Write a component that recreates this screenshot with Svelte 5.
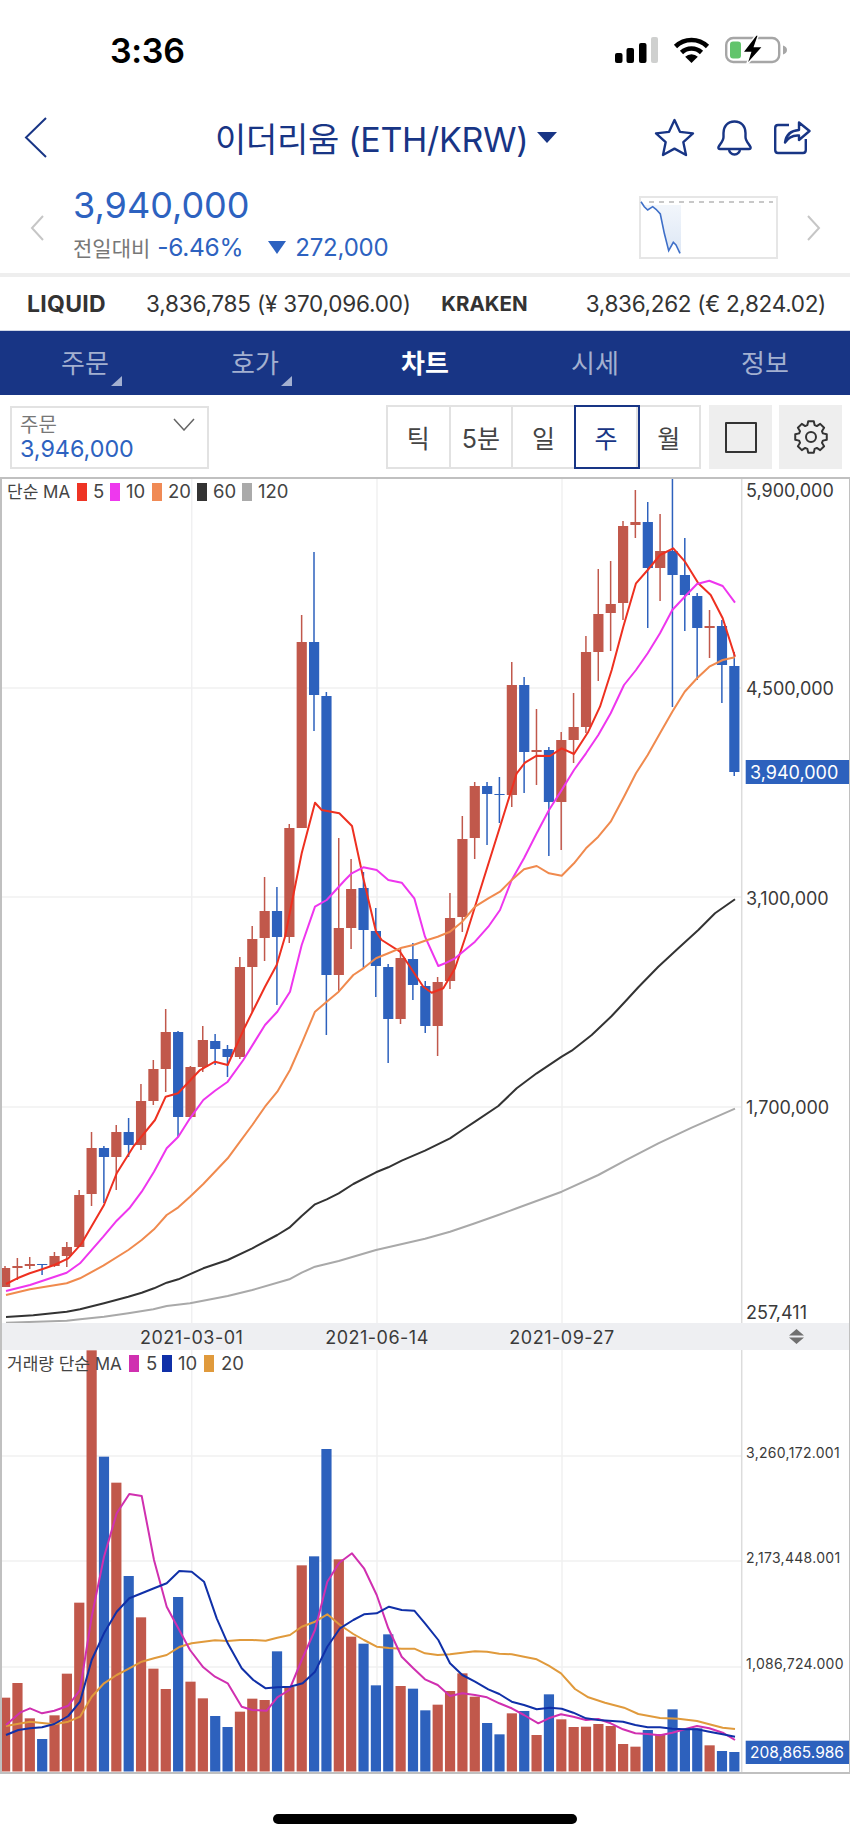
<script>
  const RED = '#c1584b';
  const BLUE = '#2d61bd';
  const cx = (i) => 5 + 12.36 * i;

  // hi, bodyTop, bodyBottom, lo, colour
  const candles = [
    [866,1268,1287,1287,'r'],[1258,1266,1268,1280,'r'],[1257,1264,1266,1269,'r'],[1264,1264,1265,1275,'b'],
    [1252,1256,1266,1267,'r'],[1242,1247,1256,1267,'r'],[1190,1195,1247,1247,'r'],[1132,1148,1194,1206,'r'],
    [1146,1148,1157,1203,'b'],[1125,1132,1157,1190,'r'],[1118,1132,1145,1157,'b'],[1084,1101,1145,1150,'r'],
    [1060,1069,1101,1105,'r'],[1009,1032,1069,1092,'r'],[1031,1032,1117,1137,'b'],[1066,1067,1117,1117,'r'],
    [1026,1040,1067,1072,'r'],[1034,1041,1049,1065,'b'],[1045,1049,1057,1077,'b'],[957,967,1057,1059,'r'],
    [926,939,967,1012,'r'],[877,911,938,961,'r'],[887,911,937,1005,'b'],[824,828,937,943,'r'],
    [615,642,828,828,'r'],[552,642,695,731,'b'],[692,696,975,1035,'b'],[838,928,975,992,'r'],
    [859,889,928,949,'r'],[872,888,930,969,'b'],[908,931,966,997,'b'],[964,967,1019,1063,'b'],
    [948,958,1019,1024,'r'],[943,959,985,1000,'b'],[981,986,1026,1033,'b'],[977,982,1026,1056,'r'],
    [893,918,981,989,'r'],[816,839,917,932,'r'],[782,786,838,859,'r'],[782,786,794,845,'b'],
    [777,794,795,823,'b'],[662,685,795,807,'r'],[677,685,752,793,'b'],[709,750,752,785,'r'],
    [747,750,802,856,'b'],[732,740,802,850,'r'],[693,727,740,763,'r'],[636,652,727,733,'r'],
    [569,614,652,681,'r'],[561,604,613,651,'r'],[521,526,603,620,'r'],[490,522,525,538,'r'],
    [502,522,568,628,'b'],[514,551,568,601,'r'],[470,551,575,707,'b'],[538,575,595,631,'b'],
    [593,596,628,680,'b'],[610,626,628,658,'r'],[620,626,665,703,'b'],[652,666,772,776,'b']
  ];

  // bar tops as read from the volume panel
  const volTops = [
    [1073,'r'],[1029,'r'],[1135,'r'],[1197,'b'],[1126,'r'],[1001,'r'],[788,'r'],[31,'r'],[350,'b'],[428,'r'],
    [708,'b'],[832,'r'],[986,'r'],[1047,'r'],[771,'b'],[1025,'r'],[1075,'r'],[1128,'b'],[1161,'b'],[1115,'r'],
    [1076,'r'],[1080,'r'],[934,'b'],[1040,'r'],[676,'r'],[649,'b'],[327,'b'],[658,'r'],[890,'r'],[911,'b'],
    [1036,'b'],[883,'b'],[1038,'r'],[1046,'b'],[1111,'b'],[1094,'r'],[1053,'r'],[1000,'r'],[1070,'r'],[1149,'b'],
    [1183,'b'],[1120,'r'],[1113,'b'],[1185,'r'],[1063,'b'],[1138,'r'],[1161,'r'],[1160,'r'],[1152,'r'],[1158,'r'],
    [1212,'r'],[1220,'r'],[1170,'b'],[1182,'r'],[1108,'b'],[1168,'b'],[1165,'b'],[1216,'r'],[1233,'b'],[1236,'b']
  ];

  const seg = (ox, oy, s) => s.map(([x, y]) => `${(ox + x / 3).toFixed(1)},${(oy + y / 3).toFixed(1)}`).join(' ');

  const priceLines = [
    { c: '#ee3020', w: 2, p: seg(0,880,[[18,1212],[52,1195],[89,1180],[126,1168],[163,1155],[205,1135],[245,1090],[312,975],[350,880],[400,800],[465,720],[497,650],[534,640],[600,570],[645,545],[683,555],[735,440],[795,320],[830,255],[855,170],[905,-80],[945,-232],[965,-210],[1018,-200],[1056,-162],[1090,-5],[1128,155],[1145,180],[1200,215],[1270,320],[1295,338],[1330,325],[1365,265],[1400,160],[1450,0],[1500,-160],[1550,-320],[1575,-352],[1610,-373],[1650,-372],[1685,-395],[1722,-378],[1765,-445],[1800,-520],[1835,-630],[1870,-760],[1908,-890],[1943,-930],[1980,-975],[2020,-995],[2055,-955],[2095,-890],[2132,-855],[2168,-785],[2205,-670]]) },
    { c: '#ee36ee', w: 2, p: seg(0,880,[[18,1233],[90,1215],[200,1178],[240,1150],[310,1070],[350,1022],[388,985],[425,935],[462,875],[500,805],[535,770],[570,715],[610,660],[645,632],[683,605],[730,540],[795,435],[832,395],[870,335],[905,195],[945,80],[980,60],[1035,0],[1055,-20],[1090,-38],[1130,-30],[1165,0],[1205,8],[1243,55],[1275,170],[1315,258],[1335,250],[1365,235],[1425,185],[1465,140],[1500,90],[1535,0],[1572,-65],[1610,-140],[1647,-210],[1685,-270],[1722,-330],[1758,-380],[1795,-435],[1832,-500],[1872,-585],[1908,-630],[1943,-680],[1980,-740],[2017,-810],[2054,-850],[2091,-888],[2128,-898],[2168,-882],[2205,-832]]) },
    { c: '#f08a4e', w: 2, p: seg(0,880,[[18,1245],[90,1228],[200,1210],[240,1195],[310,1157],[385,1110],[425,1080],[462,1048],[500,1005],[535,982],[570,950],[610,912],[683,835],[720,785],[757,735],[795,680],[832,635],[870,570],[905,490],[945,395],[980,365],[1016,335],[1060,285],[1090,265],[1128,235],[1165,220],[1205,203],[1240,195],[1275,182],[1313,170],[1350,155],[1387,125],[1425,80],[1465,55],[1500,35],[1535,0],[1572,-32],[1610,-42],[1647,-20],[1685,-13],[1722,-50],[1758,-95],[1795,-130],[1832,-175],[1872,-250],[1908,-320],[1943,-375],[1980,-440],[2017,-505],[2054,-565],[2091,-605],[2128,-640],[2168,-660],[2205,-668]]) },
    { c: '#333333', w: 2, p: seg(0,880,[[18,1311],[100,1306],[200,1295],[240,1288],[312,1270],[385,1250],[425,1238],[462,1225],[500,1208],[535,1198],[610,1165],[683,1140],[757,1105],[832,1065],[868,1043],[905,1008],[945,973],[980,958],[1016,940],[1060,912],[1128,877],[1165,862],[1205,842],[1275,812],[1350,775],[1387,750],[1425,725],[1495,678],[1550,625],[1610,580],[1685,530],[1715,512],[1775,465],[1835,408],[1875,365],[1915,322],[1975,260],[2035,205],[2095,150],[2145,100],[2205,58]]) },
    { c: '#a9a9a9', w: 2, p: seg(0,880,[[18,1328],[200,1322],[240,1318],[312,1310],[385,1300],[460,1288],[500,1278],[570,1270],[683,1248],[757,1230],[868,1198],[905,1178],[945,1160],[1016,1143],[1128,1110],[1275,1076],[1350,1055],[1425,1030],[1495,1005],[1550,985],[1685,935],[1795,885],[1875,842],[1975,790],[2075,743],[2205,686]]) }
  ];

  const volLines = [
    { c: '#e09a3c', p: seg(0,1340,[[18,1158],[90,1145],[163,1153],[205,1145],[240,1130],[275,1070],[312,1030],[350,1005],[388,985],[425,965],[462,955],[500,945],[540,920],[575,910],[645,901],[683,903],[720,900],[757,900],[797,902],[832,893],[870,885],[905,860],[945,845],[982,823],[1020,855],[1060,882],[1092,900],[1130,920],[1167,924],[1205,926],[1243,926],[1275,940],[1313,945],[1350,943],[1387,938],[1425,934],[1461,935],[1498,941],[1535,943],[1572,950],[1610,958],[1646,977],[1683,1000],[1725,1047],[1765,1072],[1815,1088],[1872,1103],[1915,1122],[1980,1134],[2035,1136],[2091,1143],[2128,1153],[2168,1163],[2205,1167]]) },
    { c: '#d030b0', p: seg(0,1340,[[18,1155],[60,1118],[90,1105],[126,1120],[163,1112],[205,1097],[240,1050],[275,830],[312,650],[350,520],[388,462],[425,468],[462,660],[500,800],[570,930],[610,982],[645,1010],[683,1030],[725,1100],[757,1110],[800,1112],[832,1072],[868,1050],[905,960],[945,870],[982,725],[1018,668],[1056,640],[1092,685],[1130,765],[1165,865],[1205,950],[1240,985],[1275,1018],[1313,1035],[1350,1068],[1387,1060],[1425,1065],[1461,1072],[1498,1090],[1535,1105],[1572,1125],[1615,1150],[1646,1135],[1683,1123],[1720,1130],[1758,1140],[1795,1137],[1832,1150],[1869,1168],[1906,1180],[1943,1182],[1980,1186],[2017,1178],[2054,1168],[2091,1158],[2128,1165],[2168,1178],[2205,1200]]) },
    { c: '#1030a8', p: seg(0,1340,[[18,1185],[55,1170],[90,1165],[126,1162],[163,1152],[205,1128],[240,1085],[275,960],[312,880],[350,815],[388,775],[425,760],[462,745],[500,730],[538,693],[575,695],[612,725],[650,835],[683,910],[725,985],[760,1020],[797,1045],[832,1042],[870,1040],[908,1030],[945,995],[982,920],[1020,865],[1060,840],[1092,823],[1130,820],[1167,800],[1205,810],[1243,812],[1275,850],[1315,900],[1350,970],[1387,1005],[1425,1025],[1465,1048],[1498,1062],[1535,1085],[1572,1095],[1610,1108],[1650,1103],[1685,1106],[1720,1118],[1758,1135],[1795,1140],[1869,1145],[1906,1155],[1943,1162],[1980,1162],[2017,1166],[2054,1168],[2091,1168],[2128,1175],[2168,1183],[2205,1190]]) }
  ];

  const vGrid = [191.7, 377, 562];
  const hGrid = [688, 897, 1107];
  const vhGrid = [1456, 1561, 1667];
  const priceLabels = [['5,900,000', 490], ['4,500,000', 688], ['3,100,000', 898], ['1,700,000', 1107], ['257,411', 1312]];
  const volLabels = [['3,260,172.001', 1453], ['2,173,448.001', 1558], ['1,086,724.000', 1664]];

  const legend1 = [[77, '#ee3424', 93, '5'], [110, '#ee38ee', 126, '10'], [152, '#f08a55', 168, '20'], [197, '#333333', 213, '60'], [242, '#aaaaaa', 258, '120']];
  const legend2 = [[129, '#d030b0', 146, '5'], [162, '#1030a8', 178, '10'], [204, '#e09a3c', 221, '20']];

  const tabs = [
    { t: '주문', m: true }, { t: '호가', m: true }, { t: '차트', on: true }, { t: '시세' }, { t: '정보' }
  ];
  const periods = ['틱', '5분', '일', '주', '월'];

  // 8-tooth gear outline
  function gear() {
    const c = 17, n = 8;
    let d = '';
    for (let i = 0; i < n; i++) {
      const a = (i * 360) / n - 90;
      const pt = (r, da) => {
        const t = ((a + da) * Math.PI) / 180;
        return `${(c + r * Math.cos(t)).toFixed(2)} ${(c + r * Math.sin(t)).toFixed(2)}`;
      };
      d += `${i ? 'L' : 'M'}${pt(12.4, -17)} L${pt(16, -10)} L${pt(16, 10)} L${pt(12.4, 17)} `;
    }
    return d + 'Z';
  }
  const gearPath = gear();
</script>

<div class="page">
  <div class="status">
    <span class="time">3:36</span>
    <div class="status-icons">
      <svg width="43" height="26" viewBox="0 0 43 26">
        <rect x="0" y="16" width="7.5" height="10" rx="2" fill="#000" />
        <rect x="11.5" y="11" width="7.5" height="15" rx="2" fill="#000" />
        <rect x="24" y="6" width="7.5" height="20" rx="2" fill="#000" />
        <rect x="36" y="0" width="7" height="26" rx="2" fill="#cfd0cf" />
      </svg>
      <svg width="37" height="26" viewBox="0 0 37 26">
        <path d="M2.5 9.5A23 23 0 0 1 34.5 9.5" fill="none" stroke="#000" stroke-width="4.6" />
        <path d="M8.5 15.5A14.5 14.5 0 0 1 28.5 15.5" fill="none" stroke="#000" stroke-width="4.6" />
        <path d="M18.5 26L12.2 19.8A9 9 0 0 1 24.8 19.8Z" fill="#000" />
      </svg>
      <svg width="62" height="30" viewBox="0 0 62 30">
        <rect x="1.2" y="3" width="53" height="24" rx="7" fill="none" stroke="#a6a6a6" stroke-width="2.4" />
        <rect x="5" y="6.5" width="11" height="17" rx="3" fill="#62c46c" />
        <path d="M58 10.5c2.5.8 4 2.3 4 4.5s-1.500 3.700-4 4.500Z" fill="#a6a6a6" />
        <path d="M31 0L17.500 17.500H25.500L21.500 30L38 11.500H29.500L33.500 0Z" fill="#000" stroke="#fff" stroke-width="1.400" />
      </svg>
    </div>
  </div>

  <div class="nav">
    <svg class="back" width="23" height="41" viewBox="0 0 23 41">
      <path d="M22 1L2 20.500L22 40" fill="none" stroke="#183585" stroke-width="2" />
    </svg>
    <span class="title">이더리움 (ETH/KRW)</span>
    <span class="caret"></span>
    <div class="nav-icons">
      <svg class="star" width="39" height="37" viewBox="2 1 36 36">
        <path d="M20 2L25.300 13.500L38 15L28.600 23.600L31.200 36L20 29.800L8.800 36L11.400 23.600L2 15L14.700 13.500Z" fill="none" stroke="#183585" stroke-width="2.300" stroke-linejoin="round" />
      </svg>
      <svg width="35" height="36" viewBox="0 0 35 36">
        <path d="M17.500 1.500C10 1.500 6.500 7 6.500 13V17C6.500 21 3 24 1.500 27Q1 29 3 29H32Q34 29 33.500 27C32 24 28.500 21 28.500 17V13C28.500 7 25 1.500 17.500 1.500ZM12 29A5.500 5.500 0 0 0 23 29" fill="none" stroke="#183585" stroke-width="2.400" stroke-linejoin="round" />
      </svg>
      <svg width="37" height="35" viewBox="0 0 37 35">
        <path d="M15 5H4Q1.200 5 1.200 8V30Q1.200 33 4 33H29Q31.800 33 31.800 30V19" fill="none" stroke="#183585" stroke-width="2.400" />
        <path d="M11 22.500C12 15 17 10.500 25 10V2.500L35.500 11L25 20V15.500C19 15 14.500 17 11 22.500Z" fill="none" stroke="#183585" stroke-width="2.400" stroke-linejoin="round" />
      </svg>
    </div>
  </div>

  <div class="price-row">
    <svg class="chev-prev" width="14" height="26" viewBox="0 0 14 26">
      <path d="M13 1L2 13L13 25" fill="none" stroke="#c6c6c6" stroke-width="2" />
    </svg>
    <div class="price-col">
      <div class="price">3,940,000</div>
      <div class="change">
        <span class="change-label">전일대비</span>
        <span class="change-pct">-6.46%</span>
        <span class="tri"></span>
        <span class="change-amt">272,000</span>
      </div>
    </div>
    <svg class="mini" width="139" height="63" viewBox="638 196 139 63">
      <defs>
        <linearGradient id="miniFill" x1="0" y1="0" x2="0" y2="1">
          <stop offset="0" stop-color="#dfe9f6" stop-opacity="0.4" />
          <stop offset="1" stop-color="#dde7f5" />
        </linearGradient>
      </defs>
      <rect x="639" y="197" width="137" height="61" fill="#fff" stroke="#e6e6e6" stroke-width="2" />
      <path d="M648 202H772" stroke="#c8c8c8" stroke-width="2" stroke-dasharray="5 5" />
      <polygon points="640,203.700 643.300,206.700 646.700,210 651.700,206.700 655,209.300 659.300,214 663.300,233.300 667.700,250.700 672.300,242.300 675,245 679,253.300 680,253.300 680,205 640,205" fill="url(#miniFill)" />
      <polyline points="640,201.700 643.300,206.700 646.700,210 651.700,206.700 655,209.300 659.300,214 663.300,233.300 667.700,250.700 672.300,242.300 675,245 679,253.300" fill="none" stroke="#3e6fc8" stroke-width="1.600" />
    </svg>
    <svg class="chev-next" width="14" height="26" viewBox="0 0 14 26">
      <path d="M1 1L12 13L1 25" fill="none" stroke="#c6c6c6" stroke-width="2" />
    </svg>
  </div>

  <div class="sep"></div>

  <div class="exchange">
    <b class="ex-name">LIQUID</b>
    <span class="ex-val">3,836,785 (¥ 370,096.00)</span>
    <b class="ex-name ex-kraken">KRAKEN</b>
    <span class="ex-val ex-right">3,836,262 (€ 2,824.02)</span>
  </div>

  <div class="tabs">
    {#each tabs as tab}
      <div class="tab" class:on={tab.on}>
        <span class="tab-label">{tab.t}{#if tab.m}<i class="corner"></i>{/if}</span>
      </div>
    {/each}
  </div>

  <div class="tools">
    <div class="select">
      <div class="select-label">주문</div>
      <div class="select-value">3,946,000</div>
      <svg class="select-chev" width="22" height="13" viewBox="0 0 22 13">
        <path d="M1 1L11 12L21 1" fill="none" stroke="#666" stroke-width="1.500" />
      </svg>
    </div>
    <div class="periods">
      {#each periods as p, i}
        <div class="period" class:sel={i === 3}>{p}</div>
      {/each}
    </div>
    <div class="tool-btn">
      <span class="square"></span>
    </div>
    <div class="tool-btn">
      <svg width="36" height="36" viewBox="-1 -1 36 36">
        <path d={gearPath} fill="none" stroke="#333" stroke-width="2" stroke-linejoin="round" />
        <circle cx="17" cy="17" r="5" fill="none" stroke="#333" stroke-width="2" />
      </svg>
    </div>
  </div>

  <div class="panel">
    <svg class="chart" width="847" height="1293" viewBox="2 479 847 1293">
      <!-- price pane grid -->
      {#each vGrid as x}
        <line x1={x} x2={x} y1="479" y2="1772" class="grid" />
      {/each}
      {#each hGrid as y}
        <line x1="2" x2="741" y1={y} y2={y} class="grid" />
      {/each}
      {#each vhGrid as y}
        <line x1="2" x2="741" y1={y} y2={y} class="grid" />
      {/each}
      <line x1="741.700" x2="741.700" y1="479" y2="1772" class="axis" />

      {#each candles as c, i}
        <line x1={cx(i)} x2={cx(i)} y1={i === 0 ? 1266 : c[0]} y2={c[3]} stroke={c[4] === 'r' ? RED : BLUE} stroke-width="1.500" />
        <rect x={cx(i) - 5} y={c[1]} width="10.200" height={c[2] - c[1]} fill={c[4] === 'r' ? RED : BLUE} />
      {/each}

      {#each priceLines as l}
        <polyline points={l.p} fill="none" stroke={l.c} stroke-width={l.w} stroke-linejoin="round" />
      {/each}

      {#each volTops as v, i}
        <rect x={cx(i) - 5} y={1340 + v[0] / 3} width="10.200" height={1771.500 - (1340 + v[0] / 3)} fill={v[1] === 'r' ? RED : BLUE} />
      {/each}

      {#each volLines as l}
        <polyline points={l.p} fill="none" stroke={l.c} stroke-width="2" stroke-linejoin="round" />
      {/each}

      <!-- time bar -->
      <rect x="2" y="1323" width="847" height="27" fill="#eeeff2" />
      <text x="191.700" y="1343.500" text-anchor="middle" class="lbl date">2021-03-01</text>
      <text x="377" y="1343.500" text-anchor="middle" class="lbl date">2021-06-14</text>
      <text x="562" y="1343.500" text-anchor="middle" class="lbl date">2021-09-27</text>
      <path d="M796.500 1329L804 1335.500H789ZM796.500 1344L804 1337.500H789Z" fill="#707070" />

      <!-- price axis -->
      {#each priceLabels as l}
        <text x="746" y={l[1] + 6.500} class="lbl">{l[0]}</text>
      {/each}
      <rect x="745.700" y="760" width="103.300" height="24" fill={BLUE} />
      <text x="750" y="778.500" class="lbl white">3,940,000</text>

      <!-- volume axis -->
      {#each volLabels as l}
        <text x="746" y={l[1] + 5} class="lbl-sm">{l[0]}</text>
      {/each}
      <rect x="745.700" y="1740.700" width="103.300" height="23.300" fill={BLUE} />
      <text x="750" y="1757.800" class="lbl-vol">208,865.986</text>

      <!-- legends -->
      <text x="7" y="498" class="lgd">단순 MA</text>
      {#each legend1 as l}
        <rect x={l[0]} y="483" width="10" height="18" fill={l[1]} />
        <text x={l[2]} y="498" class="lgd num">{l[3]}</text>
      {/each}
      <text x="7" y="1370" class="lgd">거래량 단순 MA</text>
      {#each legend2 as l}
        <rect x={l[0]} y="1355" width="10" height="17" fill={l[1]} />
        <text x={l[2]} y="1370" class="lgd num">{l[3]}</text>
      {/each}
    </svg>
  </div>

  <div class="home-wrap"><div class="home"></div></div>
</div>

<style>
  :global(body) {
    margin: 0;
    background: #fff;
  }
  .page {
    width: 850px;
    height: 1840px;
    overflow: hidden;
    background: #fff;
    font-family: Inter, "Noto Sans CJK KR", sans-serif;
    color: #333;
  }
  svg {
    display: block;
    flex: none;
  }

  .status {
    height: 100px;
    display: flex;
    align-items: center;
    padding: 0 63px 0 110px;
    box-sizing: border-box;
  }
  .time {
    font-size: 34px;
    font-weight: 600;
    color: #000;
    letter-spacing: -0.3px;
  }
  .status-icons {
    margin-left: auto;
    display: flex;
    align-items: center;
    gap: 15px;
  }

  .nav {
    height: 75px;
    display: flex;
    align-items: center;
    padding: 0 39px 0 24px;
    box-sizing: border-box;
  }
  .title {
    margin-left: 168px;
    font-size: 34px;
    color: #183585;
    letter-spacing: -0.3px;
    white-space: nowrap;
  }
  .caret {
    margin-left: 9px;
    width: 0;
    height: 0;
    border-left: 10px solid transparent;
    border-right: 10px solid transparent;
    border-top: 11px solid #183585;
  }
  .nav-icons {
    margin-left: auto;
    display: flex;
    align-items: center;
    gap: 22px;
  }
  .star {
    margin-right: 1px;
    overflow: visible;
  }

  .price-row {
    height: 98px;
    display: flex;
    align-items: center;
    padding: 7px 29px 0 30px;
    box-sizing: border-box;
  }
  .price-col {
    align-self: flex-start;
    margin: 3px 0 0 29px;
  }
  .price {
    font-size: 36px;
    line-height: 40px;
    color: #2d62c0;
  }
  .change {
    display: flex;
    align-items: center;
    height: 26px;
    margin-top: 9px;
    color: #2d62c0;
  }
  .change-label {
    font-size: 21px;
    color: #777;
  }
  .change-pct {
    font-size: 24.500px;
    margin-left: 7px;
    letter-spacing: -0.3px;
  }
  .tri {
    width: 0;
    height: 0;
    margin-left: 25px;
    border-left: 9.500px solid transparent;
    border-right: 9.500px solid transparent;
    border-top: 13px solid #2d62c0;
  }
  .change-amt {
    font-size: 24px;
    margin-left: 9px;
    letter-spacing: -0.2px;
  }
  .mini {
    margin-left: auto;
  }
  .chev-next {
    margin-left: 29px;
  }

  .sep {
    height: 4px;
    background: #eeeeee;
  }

  .exchange {
    height: 53px;
    display: flex;
    align-items: center;
    padding: 0 24px 0 27px;
    box-sizing: border-box;
    font-size: 22.500px;
    color: #333;
  }
  .ex-name {
    font-size: 23px;
    font-weight: 700;
    letter-spacing: 0.3px;
    width: 119px;
    flex: none;
  }
  .ex-val {
    letter-spacing: -0.2px;
    white-space: nowrap;
  }
  .ex-kraken {
    font-size: 20.500px;
    letter-spacing: 0;
    margin-left: auto;
    width: auto;
  }
  .ex-right {
    margin-left: 58px;
    letter-spacing: -0.3px;
  }

  .tabs {
    height: 65px;
    display: flex;
    background: #183585;
    border-top: 1px solid #cfd6e6;
    box-sizing: border-box;
  }
  .tab {
    flex: 1;
    display: flex;
    align-items: center;
    justify-content: center;
    color: #a3b0d0;
    font-size: 26px;
    padding-bottom: 3px;
  }
  .tab.on {
    color: #fff;
    font-weight: 700;
  }
  .tab-label {
    position: relative;
  }
  .corner {
    position: absolute;
    right: -13px;
    bottom: -6px;
    width: 0;
    height: 0;
    border-left: 11px solid transparent;
    border-bottom: 10px solid #a3b0d0;
  }

  .tools {
    height: 82px;
    display: flex;
    align-items: flex-start;
    padding: 10px 8px 0 10px;
    box-sizing: border-box;
  }
  .select {
    position: relative;
    width: 199px;
    height: 63px;
    margin-top: 1px;
    padding: 5px 0 0 8px;
    box-sizing: border-box;
    border: 2px solid #e2e2e2;
  }
  .select-label {
    font-size: 20px;
    line-height: 24px;
    color: #777;
  }
  .select-value {
    font-size: 23.300px;
    line-height: 24px;
    color: #2d62c0;
  }
  .select-chev {
    position: absolute;
    right: 12px;
    top: 10px;
  }
  .periods {
    width: 315px;
    height: 64px;
    margin-left: 177px;
    display: flex;
    border: 2px solid #e2e2e2;
    box-sizing: border-box;
  }
  .period {
    flex: 1;
    display: flex;
    align-items: center;
    justify-content: center;
    font-size: 25px;
    color: #444;
    border-right: 2px solid #e2e2e2;
  }
  .period:last-child {
    border-right: 0;
  }
  .period.sel {
    color: #183585;
    outline: 2px solid #183585;
    outline-offset: 0;
    position: relative;
  }
  .tool-btn {
    width: 63px;
    height: 64px;
    margin-left: 8px;
    background: #eeeeee;
    display: flex;
    align-items: center;
    justify-content: center;
  }
  .tool-btn + .tool-btn {
    margin-left: 7px;
  }
  .square {
    width: 28px;
    height: 27px;
    border: 2px solid #333;
    border-radius: 1px;
  }

  .panel {
    width: 850px;
    box-sizing: border-box;
    border-style: solid;
    border-color: #c0c0c0;
    border-width: 2px 1px 2px 2px;
  }
  .grid {
    stroke: #f0f0f1;
    stroke-width: 1.500;
  }
  .axis {
    stroke: #dcdcdc;
    stroke-width: 1.500;
  }
  .lbl {
    font-size: 18px;
    fill: #3a3a3a;
  }
  .lbl.date {
    letter-spacing: 0.5px;
  }
  .lbl.white {
    fill: #fff;
  }
  .lbl-sm {
    font-size: 14px;
    fill: #3a3a3a;
    letter-spacing: 0.3px;
  }
  .lbl-vol {
    font-size: 15.500px;
    fill: #fff;
  }
  .lgd {
    font-size: 17px;
    fill: #444;
  }
  .lgd.num {
    font-size: 18.500px;
  }

  .home-wrap {
    padding-top: 40px;
    display: flex;
    justify-content: center;
  }
  .home {
    width: 304px;
    height: 10px;
    border-radius: 5px;
    background: #000;
  }
</style>
